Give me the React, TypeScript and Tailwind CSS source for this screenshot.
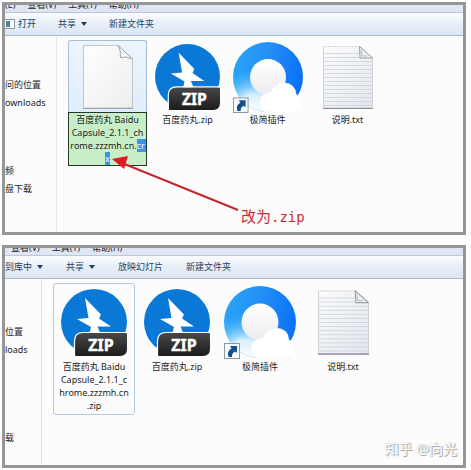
import { useEffect, useRef, type ReactNode } from "react";

function ZipIcon({ className }: { className: string }) {
  return (
    <svg viewBox="0 0 66 67" className={className} aria-hidden="true">
      <defs>
        <linearGradient id="zipBadge" x1="0" y1="0" x2="0" y2="1">
          <stop offset="0" stopColor="#484848" />
          <stop offset="1" stopColor="#1c1c1c" />
        </linearGradient>
      </defs>
      <circle cx="33" cy="33" r="33" fill="#0a78d6" />
      <path d="M24 9 L40 25.500 L38 29.500 L50 37.500 L36.500 37.500 L40 46 H28 L30 38 L16 30 L27.500 29 Z" fill="#fff" />
      <path
        d="M22 44 H65 Q66 44 66 45 V60 Q66 67 59 67 H15 Q14 67 14 66 V52 Q14 44 22 44 Z"
        fill="url(#zipBadge)"
      />
      <path d="M13.500 67 V52 Q13.500 43.500 22 43.500 H66" fill="none" stroke="#fff" strokeWidth="1.200" />
      <text
        x="40"
        y="61.500"
        textAnchor="middle"
        fontSize="16"
        fontWeight="700"
        fill="#fff"
        stroke="#fff"
        strokeWidth="0.400"
        fontFamily="'Noto Sans', sans-serif"
      >
        ZIP
      </text>
    </svg>
  );
}

function CloudIcon({ className }: { className: string }) {
  return (
    <svg viewBox="0 0 72 73" className={className} aria-hidden="true">
      <defs>
        <linearGradient id="ring" x1="0" y1="0.3" x2="1" y2="0.5">
          <stop offset="0" stopColor="#2aa5f6" />
          <stop offset="0.5" stopColor="#238df5" />
          <stop offset="1" stopColor="#0a70f8" />
        </linearGradient>
        <radialGradient id="ringFade" cx="0.3" cy="1" r="0.62">
          <stop offset="0" stopColor="#fff" />
          <stop offset="0.4" stopColor="#eefaff" stopOpacity="0.9" />
          <stop offset="1" stopColor="#35c3ff" stopOpacity="0" />
        </radialGradient>
        <linearGradient id="hole" x1="0" y1="0" x2="0" y2="1">
          <stop offset="0" stopColor="#fff" />
          <stop offset="1" stopColor="#ececf0" />
        </linearGradient>
      </defs>
      <circle cx="36" cy="36" r="36" fill="url(#ring)" />
      <circle cx="36" cy="36" r="36" fill="url(#ringFade)" />
      <circle cx="36" cy="36" r="18.500" fill="url(#hole)" />
      <path
        d="M34 72 Q26 70 27 61 Q29 52 39 52 Q42 42 53 42 Q64 43 65 54 Q72 57 72 63 Q71 71 62 72 Z"
        fill="#fff"
        stroke="#eef1f5"
        strokeWidth="0.500"
      />
      <rect x="0.500" y="57.500" width="15" height="15" fill="#f7f9fb" stroke="#8b98a6" />
      <path d="M4.500 71 Q2.500 65 7.500 62.500 L6 60 H13 V67 L11 65.500 Q7.500 67 8 71 Z" fill="#164f8e" />
    </svg>
  );
}

function BlankPageIcon({ className }: { className: string }) {
  return (
    <svg viewBox="0 0 50 64" className={className} aria-hidden="true">
      <defs>
        <linearGradient id="blankPage" x1="0" y1="0" x2="1" y2="1">
          <stop offset="0" stopColor="#fff" />
          <stop offset="1" stopColor="#ededee" />
        </linearGradient>
      </defs>
      <path d="M0.500 0.500 H35 L49.500 14 V63 H0.500 Z" fill="url(#blankPage)" stroke="#c2c5c9" />
      <path d="M35 0.500 Q38 5 37.500 12.500 Q44 11 49.500 14 Z" fill="#f8f9fa" stroke="#a3a7ac" />
      <path d="M0 63.500 H50" stroke="#a0a4a8" />
    </svg>
  );
}

function TextPageIcon({ className }: { className: string }) {
  const lines = Array.from({ length: 14 }, (_, i) => 8 + i * 4);
  return (
    <svg viewBox="0 0 50 64" className={className} aria-hidden="true">
      <defs>
        <linearGradient id="textPage" x1="0" y1="0" x2="1" y2="1">
          <stop offset="0" stopColor="#fcfcfd" />
          <stop offset="1" stopColor="#e3e6ec" />
        </linearGradient>
      </defs>
      <path d="M0.500 1.500 H37 L49.500 13 V63 H0.500 Z" fill="url(#textPage)" stroke="#ced2d7" />
      {lines.map((y) => (
        <path key={y} d={`M1 ${y + 0.5} H${y < 14 ? 37 : 49}`} stroke="#ccd2dc" strokeWidth="0.800" />
      ))}
      <path d="M1 1.500 H37" stroke="#fff" strokeDasharray="1 2" />
      <path d="M36.500 1.500 L37 13 H49.500 Z" fill="#eff1f3" stroke="#9a9fa6" />
      <path d="M38 5 L39 11 L44 11" fill="none" stroke="#b5b9bf" />
      <path d="M0 63.500 H50" stroke="#868c94" />
    </svg>
  );
}

function Menu({ labels, className }: { labels: string[]; className?: string }) {
  return (
    <div className={`flex h-[7px] items-end gap-3 overflow-hidden bg-[#dfe5f3] pb-0.5 leading-[11px] ${className ?? ""}`}>
      {labels.map((label) => (
        <button key={label} type="button" className="shrink-0 whitespace-nowrap">
          {label}
        </button>
      ))}
    </div>
  );
}

function ToolButton({ children, arrow }: { children: ReactNode; arrow?: boolean }) {
  return (
    <button type="button" className="flex shrink-0 items-center gap-[5px] whitespace-nowrap">
      {children}
      {arrow && (
        <svg viewBox="0 0 6 4" className="h-1 w-1.5" aria-hidden="true">
          <path d="M0 0 H6 L3 4 Z" fill="#1e395b" />
        </svg>
      )}
    </button>
  );
}

function Toolbar({ children, className }: { children: ReactNode; className: string }) {
  return (
    <div
      className={`flex h-6 items-center overflow-hidden border-y border-t-[#bcc8da] border-b-[#a9b8cb] bg-linear-to-b from-[#f8fbfe] from-10% via-[#e6eef8] via-50% to-[#dce6f4] text-[#2b4160] ${className}`}
    >
      {children}
    </div>
  );
}

function FileItem({
  icon,
  lines,
  wide,
  outlined,
}: {
  icon: ReactNode;
  lines: string[];
  wide?: boolean;
  outlined?: boolean;
}) {
  return (
    <li
      className={`flex shrink-0 flex-col items-center rounded-[3px] border pb-0.5 ${wide ? "w-[82px]" : "w-[79px]"} ${
        outlined ? "border-[#b4c9dc]" : "border-transparent"
      }`}
    >
      <div className={`flex items-center justify-center ${wide ? "h-[76px]" : "h-[72px]"}`}>{icon}</div>
      <p className="text-center leading-[13px] whitespace-nowrap">
        {lines.map((line) => (
          <span key={line} className="block">
            {line}
          </span>
        ))}
      </p>
    </li>
  );
}

const draftName = "百度药丸 Baidu\nCapsule_2.1.1_ch\nrome.zzzmh.cn.crx";

function RenamingItem() {
  const field = useRef<HTMLTextAreaElement>(null);

  useEffect(() => {
    field.current?.focus();
    field.current?.setSelectionRange(draftName.length - 3, draftName.length);
  }, []);

  return (
    <li className="flex w-[79px] shrink-0 flex-col rounded-t-[3px] border border-b-0 border-[#a5bdd8] bg-linear-to-b from-[#edf5fd] to-[#d6e7f9]">
      <div className="flex h-[71px] items-center justify-center">
        <BlankPageIcon className="h-16 w-[50px]" />
      </div>
      <textarea
        ref={field}
        rows={4}
        aria-label="文件名"
        defaultValue={draftName}
        className="-mx-px block resize-none overflow-hidden border border-[#26382a] bg-[#c8eec8] text-center leading-[13px] break-all outline-none selection:bg-[#3c94ea] selection:text-white"
      />
    </li>
  );
}

export default function App() {
  return (
    <main className="flex flex-col gap-2.5 bg-white pt-0.5 pr-[5px] pb-[3px] pl-0.5 font-['Noto_Sans','Noto_Sans_CJK_SC',sans-serif] text-[9px] text-[#1c1c1c]">
      <section className="relative border-[3px] border-[#969696] bg-[#fcfcfc]">
        <Menu labels={["(E)", "查看(V)", "工具(T)", "帮助(H)"]} />
        <Toolbar className="gap-[22px]">
          <ToolButton>
            <span className="-mr-0.5 flex h-2.5 w-2.5 border border-l-0 border-[#8b9aab] bg-white p-px">
              <span className="w-1 bg-[#53809a]" />
            </span>
            打开
          </ToolButton>
          <ToolButton arrow>共享</ToolButton>
          <ToolButton>新建文件夹</ToolButton>
        </Toolbar>
        <div className="flex">
          <nav className="flex w-[52px] shrink-0 flex-col overflow-hidden border-r border-[#e0e8f2] pt-10 leading-[18px] whitespace-nowrap">
            <a href="#recent">问的位置</a>
            <a href="#downloads">ownloads</a>
            <a href="#videos" className="mt-[50px]">频</a>
            <a href="#cloud">盘下载</a>
          </nav>
          <ul className="flex grow items-start gap-px pt-1 pb-[66px] pl-[11px]">
            <RenamingItem />
            <FileItem icon={<ZipIcon className="h-[66px] w-[65px]" />} lines={["百度药丸.zip"]} />
            <FileItem icon={<CloudIcon className="h-[71px] w-[70px]" />} lines={["极简插件"]} />
            <FileItem icon={<TextPageIcon className="h-16 w-[50px]" />} lines={["说明.txt"]} />
          </ul>
        </div>
        <svg viewBox="0 0 130 56" className="absolute top-[151px] left-[107px] h-14 w-[130px]" aria-hidden="true">
          <path d="M10 7 L126 54" stroke="#c5262e" strokeWidth="2" />
          <path d="M0 3 L16 0 L12 13 Z" fill="#e01b20" />
        </svg>
        <p className="absolute top-[201px] left-[236px] flex items-baseline text-[15px] leading-5 text-[#cf2a30]">
          改为<span className="font-['DejaVu_Sans_Mono',monospace] text-[14px]">.zip</span>
        </p>
      </section>

      <section className="relative border-[3px] border-[#969696] bg-[#fcfcfc]">
        <Menu className="pl-1.5" labels={["查看(V)", "工具(T)", "帮助(H)"]} />
        <Toolbar className="gap-[23px]">
          <ToolButton arrow>到库中</ToolButton>
          <ToolButton arrow>共享</ToolButton>
          <ToolButton>放映幻灯片</ToolButton>
          <ToolButton>新建文件夹</ToolButton>
        </Toolbar>
        <div className="flex">
          <nav className="flex w-[37px] shrink-0 flex-col overflow-hidden border-r border-[#d5e2ee] pt-11 leading-[18px] whitespace-nowrap">
            <a href="#places">位置</a>
            <a href="#loads">loads</a>
            <a href="#saved" className="mt-[70px]">载</a>
          </nav>
          <ul className="flex grow items-start gap-px pt-1 pb-[50px] pl-[11px]">
            <FileItem
              wide
              outlined
              icon={<ZipIcon className="h-[67px] w-[66px]" />}
              lines={["百度药丸 Baidu", "Capsule_2.1.1_c", "hrome.zzzmh.cn", ".zip"]}
            />
            <FileItem wide icon={<ZipIcon className="h-[67px] w-[66px]" />} lines={["百度药丸.zip"]} />
            <FileItem wide icon={<CloudIcon className="h-[73px] w-[72px]" />} lines={["极简插件"]} />
            <FileItem wide icon={<TextPageIcon className="h-[66px] w-[51px]" />} lines={["说明.txt"]} />
          </ul>
        </div>
        <p className="absolute right-1.5 bottom-1.5 text-sm leading-5 text-white [text-shadow:1px_1px_0px_#aaa,0_0_1px_#aaa]">
          知乎 @向光
        </p>
      </section>
    </main>
  );
}
